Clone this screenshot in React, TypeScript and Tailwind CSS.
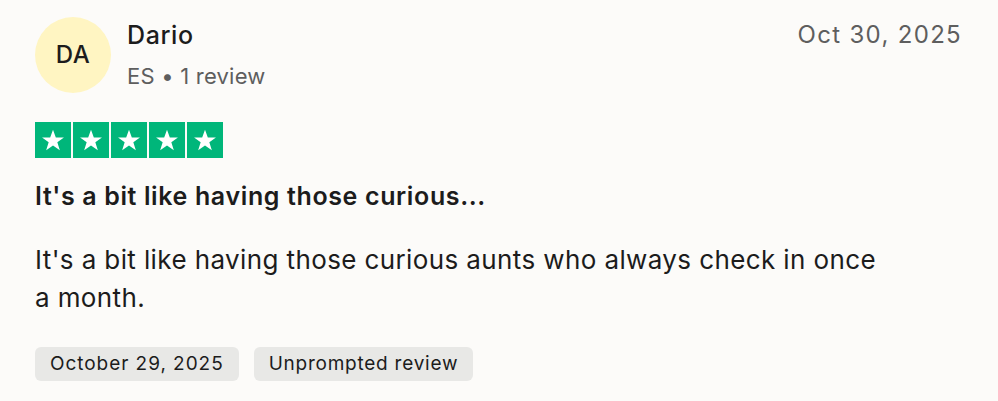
function Star() {
  return (
    <div className="flex h-9 w-9 items-center justify-center bg-[#00b67a]">
      <svg viewBox="0 0 24 24" className="h-[26px] w-[26px]" fill="white">
        <path d="M12 2.5l2.6 7.1h7.5l-6.1 4.5 2.3 7.4L12 17l-6.3 4.5 2.3-7.4-6.1-4.5h7.5z" />
      </svg>
    </div>
  )
}

export default function App() {
  return (
    <div className="min-h-[401px] w-full bg-[#fcfbf9] px-[35px] pt-[17px] text-[#1c1c1c]" style={{ fontFamily: "Inter, 'Noto Sans', sans-serif" }}>
      <div className="flex items-start justify-between">
        <div className="flex items-start gap-[16px]">
          <div className="flex h-[76px] w-[76px] items-center justify-center rounded-full bg-[#fff5c2] text-[24px] font-medium tracking-[0.02em]">
            DA
          </div>
          <div className="flex flex-col">
            <span className="text-[25px] leading-[36px] font-medium tracking-[0.025em]">Dario</span>
            <span className="mt-[9px] text-[22px] leading-[28px] tracking-[0.01em] text-[#5e5e5e]">ES • 1 review</span>
          </div>
        </div>
        <span className="mr-[1px] text-[24px] leading-[36px] tracking-[0.055em] text-[#5e5e5e]">Oct 30, 2025</span>
      </div>

      <div className="mt-[29px] flex gap-[2px]">
        <Star />
        <Star />
        <Star />
        <Star />
        <Star />
      </div>

      <h2 className="mt-[23px] text-[25px] leading-[30px] font-semibold tracking-[0.025em]">It's a bit like having those curious...</h2>

      <p className="mt-[30px] max-w-[852px] text-[26px] leading-[38px] tracking-[0.015em]">
        It's a bit like having those curious aunts who always check in once a month.
      </p>

      <div className="mt-[30px] flex gap-[15px]">
        <span className="rounded-[6px] bg-[#e8e8e6] px-[15px] py-[5px] text-[19px] leading-[24px] tracking-[0.05em]">October 29, 2025</span>
        <span className="rounded-[6px] bg-[#e8e8e6] px-[15px] py-[5px] text-[19px] leading-[24px] tracking-[0.04em]">Unprompted review</span>
      </div>
    </div>
  )
}
